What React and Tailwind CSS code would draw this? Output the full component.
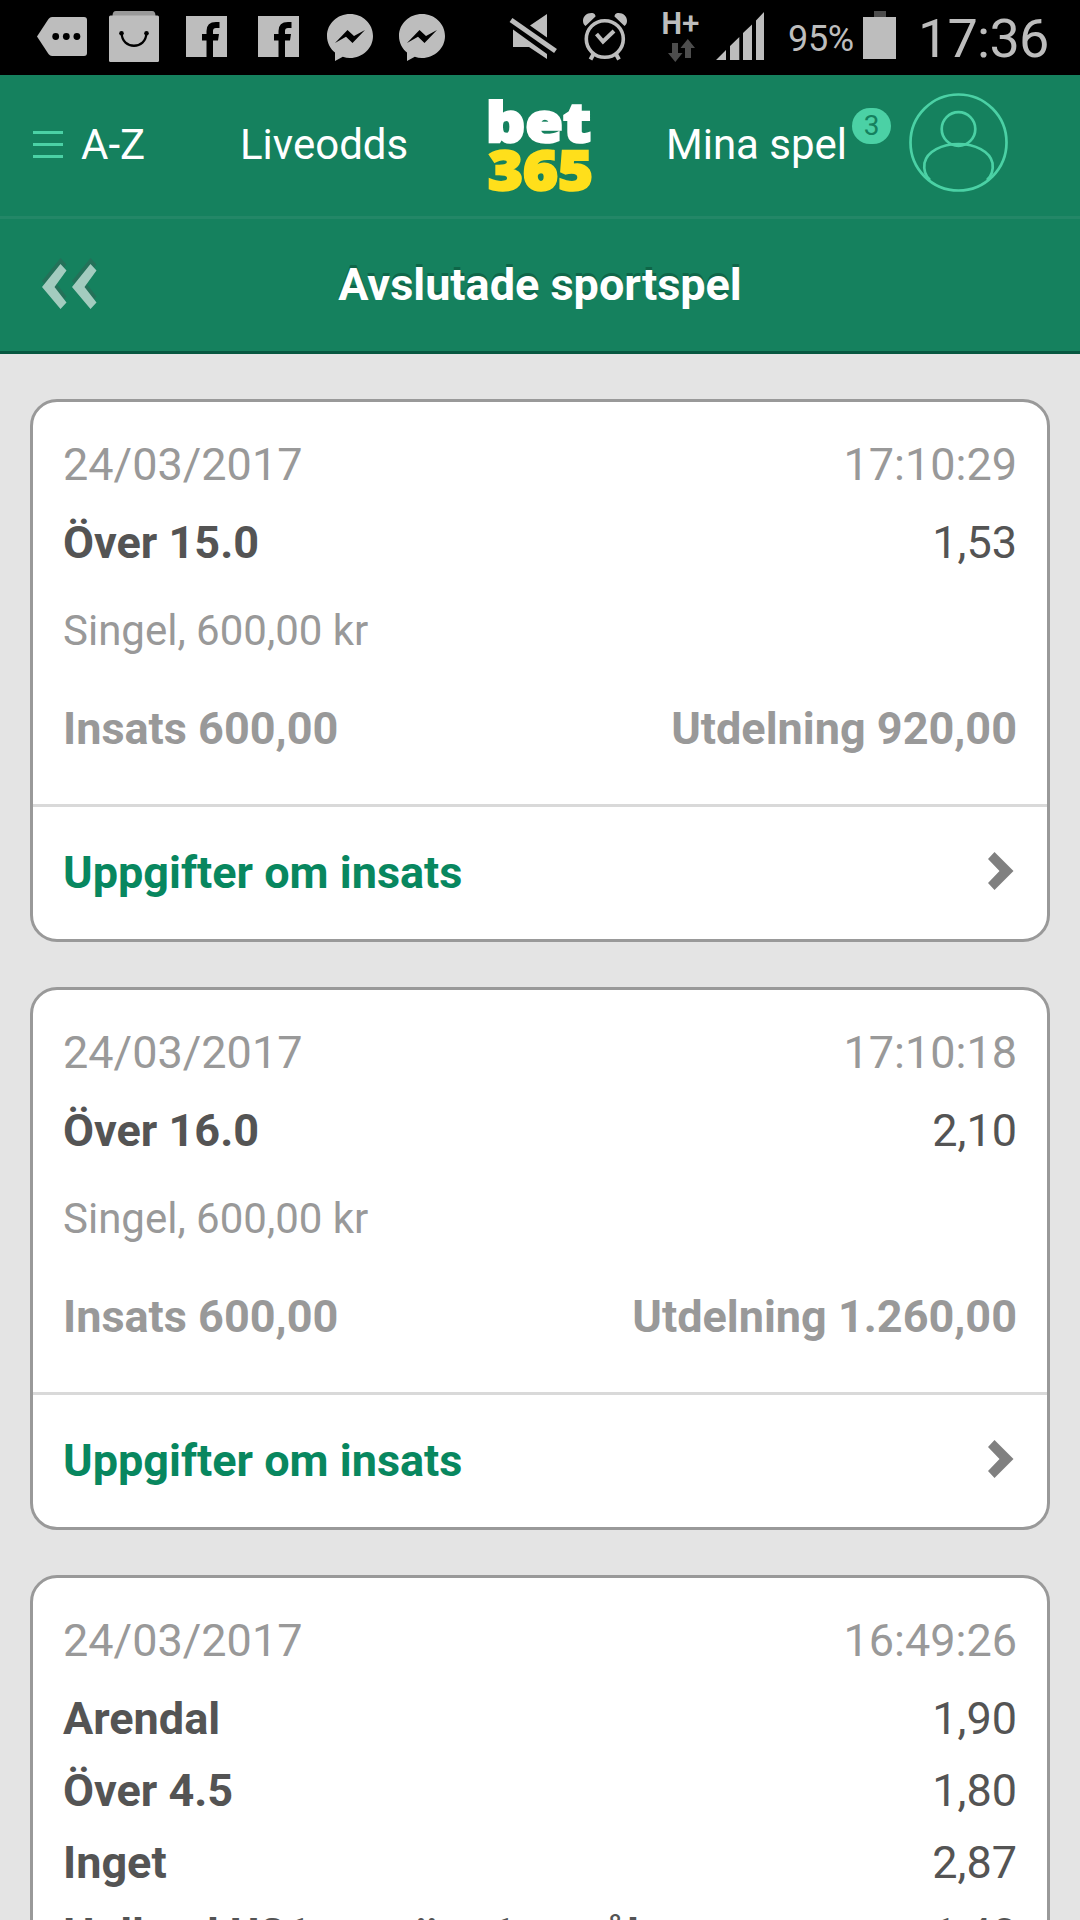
import React from "react";

const BETS = [
  {
    date: "24/03/2017",
    time: "17:10:29",
    legs: [["Över 15.0", "1,53"]],
    type: "Singel, 600,00 kr",
    stake: "Insats 600,00",
    payout: "Utdelning 920,00",
  },
  {
    date: "24/03/2017",
    time: "17:10:18",
    legs: [["Över 16.0", "2,10"]],
    type: "Singel, 600,00 kr",
    stake: "Insats 600,00",
    payout: "Utdelning 1.260,00",
  },
  {
    date: "24/03/2017",
    time: "16:49:26",
    legs: [
      ["Arendal", "1,90"],
      ["Över 4.5", "1,80"],
      ["Inget", "2,87"],
      ["Holland U21 att göra 1:a mål", "1,40"],
    ],
  },
];

function MessageIcon() {
  return (
    <svg className="h-[75px] w-[50px]" viewBox="37 0 50 75">
      <path d="M37 36.5 48.5 19q1.500-2 3.500-2H84q3 0 3 3V53q0 3-3 3H52q-2 0-3.500-2Z" fill="#bdbdbd" />
      <g fill="#000">
        <circle cx="55.700" cy="36.500" r="3.400" />
        <circle cx="66.300" cy="36.500" r="3.400" />
        <circle cx="76.900" cy="36.500" r="3.400" />
      </g>
    </svg>
  );
}

function BagIcon() {
  return (
    <svg className="ml-[22px] h-[75px] w-[50px]" viewBox="109 0 50 75">
      <path d="M112.500 16q0-5 3.500-5h36q3.500 0 3.500 5Z" fill="#999" />
      <rect x="109" y="15.500" width="50" height="46.500" rx="1.500" fill="#bdbdbd" />
      <path d="M121.700 33c0 17 24.600 17 24.600 0" fill="none" stroke="#000" strokeWidth="2.300" />
      <circle cx="121.500" cy="33.200" r="2.300" />
      <circle cx="146.500" cy="33.200" r="2.300" />
    </svg>
  );
}

function FacebookIcon({ className }) {
  return (
    <svg className={className} viewBox="186 0 41 75">
      <path d="M186 16h41v41h-14V40.500h5l1-6.500h-6v-3q0-3 3-3h3.500v-6H216q-9.500 0-9.500 9v3H202v6.500h4.500V57H186Z" fill="#bdbdbd" />
    </svg>
  );
}

function MessengerIcon({ className }) {
  return (
    <svg className={className} viewBox="327 0 46 75">
      <path d="M350 14c12.700 0 23 9.700 23 22s-10.300 22-23 22c-2.500 0-5-.400-7.200-1.200L335 61v-8.500c-5-4-8-9.800-8-16.500 0-12.300 10.300-22 23-22Z" fill="#bdbdbd" />
      <path d="M335 43 347.500 30l6.500 6 11-6-12.500 13-6.500-6.300Z" fill="#000" />
    </svg>
  );
}

function StatusBar() {
  return (
    <div className="flex h-[75px] items-center bg-black pl-[37px] text-[#bdbdbd]">
      <MessageIcon />
      <BagIcon />
      <FacebookIcon className="ml-[27px] h-[75px] w-[41px]" />
      <FacebookIcon className="ml-[31px] h-[75px] w-[41px]" />
      <MessengerIcon className="ml-[28px] h-[75px] w-[46px]" />
      <MessengerIcon className="ml-[26px] h-[75px] w-[46px]" />
      <svg className="ml-[64px] h-[75px] w-[48px]" viewBox="509 0 48 75" fill="#bdbdbd">
        <path d="M547 14v23.500L530 25.500ZM513 29.500 547 54v5L529 47H513Z" />
        <path d="m511 20 44.500 31" stroke="#bdbdbd" strokeWidth="5" />
      </svg>
      <svg className="ml-[25px] h-[75px] w-[46px]" viewBox="582 0 46 75" fill="none" stroke="#bdbdbd">
        <ellipse cx="604.800" cy="39" rx="18.500" ry="18.300" strokeWidth="3.600" />
        <path d="m596.500 34 6.500 7.500L614 31" strokeWidth="4" />
        <path d="m593.500 54-3 5.500M616 54l3 5.500" strokeWidth="4" />
        <path d="M583 21c0-5 4-8.500 9.500-8 2 .500 3 1.500 3 3.500L585.500 26c-1.500-1-2.500-3-2.500-5ZM627 21c0-5-4-8.500-9.500-8-2 .500-3 1.500-3 3.500L624.500 26c1.500-1 2.500-3 2.500-5Z" fill="#bdbdbd" stroke="none" />
      </svg>
      <svg className="ml-[33px] h-[75px] w-[40px]" viewBox="661 0 40 75">
        <text x="661.500" y="34" fill="#bdbdbd" className="font-[Roboto] text-[31.5px]">
          <tspan className="font-bold" textLength="20.500" lengthAdjust="spacingAndGlyphs">H</tspan>
          <tspan x="682" className="font-medium">+</tspan>
        </text>
        <path d="M672 43h6v10h4.500l-7.200 9-7.300-9h4ZM685 58h6V48h4l-7.200-9-7.300 9h4.500Z" fill="#4d4d4d" />
      </svg>
      <svg className="ml-[15px] h-[75px] w-[48px]" viewBox="716 0 48 75" fill="#bdbdbd">
        <path d="M716 60l10-10v10ZM730 60V46l9.300-9v23ZM743 60V33l9-8.500V60ZM756 60V20.500l8-8.500v48Z" />
      </svg>
      <span className="ml-[24px] w-[67px] pt-[4px] text-[36px] leading-[71px] tracking-[-0.3px] whitespace-nowrap">95%</span>
      <svg className="ml-[8px] h-[75px] w-[33px]" viewBox="863 0 33 75">
        <path d="M874 11h12v6h-12Z" fill="#4d4d4d" />
        <path d="M863 17h33v42h-33Z" fill="#bdbdbd" />
      </svg>
      <span className="ml-[22px] pt-[3px] text-[54px] leading-[72px] tracking-[-0.8px] whitespace-nowrap">17:36</span>
    </div>
  );
}

function NavBar() {
  return (
    <div className="flex h-[144px] items-center border-b-[3px] border-[#238767] pb-[2px] pl-[33px] text-[42px] text-white">
      <div className="flex w-[207px] items-center">
        <div className="flex flex-col gap-[9px]">
          <div className="h-[3px] w-[30px] bg-[#4bd1a5]" />
          <div className="h-[3px] w-[30px] bg-[#4bd1a5]" />
          <div className="h-[3px] w-[30px] bg-[#4bd1a5]" />
        </div>
        <span className="ml-[18px]">A-Z</span>
      </div>
      <span className="w-[246px]">Liveodds</span>
      <svg className="h-[110px] w-[120px] shrink-0 overflow-visible" viewBox="486 90 120 110">
        <text x="486" y="142" textLength="105" lengthAdjust="spacingAndGlyphs" fill="#fff" stroke="#fff" strokeWidth="2.400" className="font-['Open_Sans'] text-[55px] font-extrabold">bet</text>
        <text x="488" y="190" textLength="105" lengthAdjust="spacingAndGlyphs" fill="#ffdf1b" stroke="#ffdf1b" strokeWidth="2.400" className="font-['Open_Sans'] text-[55px] font-extrabold">365</text>
      </svg>
      <span className="ml-[60px] w-[186px] whitespace-nowrap">Mina spel</span>
      <span className="mb-[38px] flex h-[36px] w-[39px] items-center justify-center rounded-[18px] bg-[#4bd1a5] text-[28px] leading-none text-[#15815e]">3</span>
      <svg className="mb-[4px] ml-[18px] h-[99px] w-[99px]" viewBox="0 0 99 99" fill="none" stroke="#4bd1a5" strokeWidth="2.700">
        <circle cx="49.500" cy="49.500" r="48" />
        <circle cx="49.500" cy="36" r="16.800" />
        <path d="M21 87C15.500 82 14.500 77 15.500 70 18 58.500 33 51 49.500 51S81 58.500 83.500 70C84.500 77 83.500 82 78 87" />
      </svg>
    </div>
  );
}

function TitleBar() {
  return (
    <div className="grid h-[135px] grid-cols-[120px_1fr_120px] items-center border-b-[3px] border-[#065740] text-white">
      <svg className="ml-[39px] h-[60px] w-[60px]" viewBox="39 255 60 60">
        <path d="m60.500 258 6 6.500L54.500 281 66.500 296.500l-6 6.500L42 281ZM90.500 258l6 6.500L84.500 281 96.500 296.500l-6 6.500L72 281Z" fill="#247159" />
        <path d="m60.500 264 6 6.500L54.500 287 66.500 302.500l-6 6.500L42 287ZM90.500 264l6 6.500L84.500 287 96.500 302.500l-6 6.500L72 287Z" fill="#a3ccbf" />
      </svg>
      <h1 className="text-center text-[45px] font-bold [text-shadow:0_-3px_0_#0f6648]">Avslutade sportspel</h1>
    </div>
  );
}

function BetCard({ bet }) {
  return (
    <section className="rounded-[27px] border-[3px] border-[#999] bg-white text-[45px] text-[#999]">
      <div className="px-[30px] pt-[27px] pb-[45px]">
        <div className="flex justify-between leading-[72px]">
          <span>{bet.date}</span>
          <span>{bet.time}</span>
        </div>
        <div className="mt-[6px] text-[#545454]">
          {bet.legs.map(([name, odds]) => (
            <div key={name} className="flex justify-between leading-[72px]">
              <span className="font-bold">{name}</span>
              <span>{odds}</span>
            </div>
          ))}
        </div>
        {bet.type && <div className="mt-[22px] text-[42px] leading-[60px]">{bet.type}</div>}
        {bet.stake && (
          <div className="mt-[38px] flex justify-between leading-[60px] font-bold">
            <span>{bet.stake}</span>
            <span>{bet.payout}</span>
          </div>
        )}
      </div>
      {bet.stake && (
        <div className="flex h-[135px] items-center justify-between border-t-[3px] border-[#d9d9d9] pr-[33px] pl-[30px]">
          <span className="font-bold text-[#08875f]">Uppgifter om insats</span>
          <svg className="mb-[5px] h-[40px] w-[27px]" viewBox="0 0 27 40">
            <path d="M7.500 1 26.500 20 7.500 39 1 32 12.500 20 1 8Z" fill="#808080" className="blur-[0.6px]" />
          </svg>
        </div>
      )}
    </section>
  );
}

export default function App() {
  return (
    <div className="flex h-[1920px] w-[1080px] flex-col overflow-hidden bg-[#e4e4e4] font-[Roboto,sans-serif]">
      <StatusBar />
      <header className="bg-[#15815e]">
        <NavBar />
        <TitleBar />
      </header>
      <main className="flex flex-col gap-[45px] px-[30px] pt-[45px]">
        {BETS.map((bet) => (
          <BetCard key={bet.time} bet={bet} />
        ))}
      </main>
    </div>
  );
}
